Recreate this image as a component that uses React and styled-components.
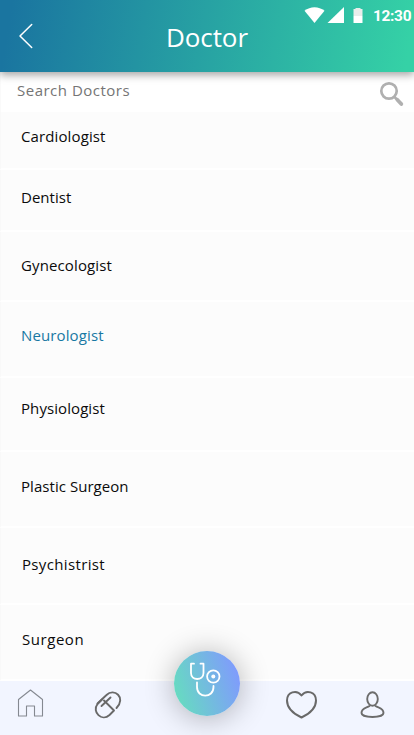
import React from "react";
import styled, { createGlobalStyle } from "styled-components";

const GlobalStyle = createGlobalStyle`
  * { box-sizing: border-box; }
  body { margin: 0; background: #fff; font-family: "Open Sans", "Noto Sans", sans-serif; }
`;

const Screen = styled.div`
  width: 414px;
  height: 735px;
  display: flex;
  flex-direction: column;
  overflow: hidden;
  background: #fff;
`;

const Header = styled.header`
  position: relative;
  z-index: 1;
  flex: none;
  height: 72px;
  display: grid;
  grid-template-columns: 133px 148px 133px;
  background: linear-gradient(100deg, #1a75a0 3%, #35d1a6 98%);
  box-shadow: 0 3px 8px rgba(0, 0, 0, 0.36);
`;

const BackButton = styled.button`
  display: flex;
  align-items: flex-start;
  padding: 23px 0 0 18px;
  border: 0;
  background: none;
`;

const Title = styled.h1`
  margin: 0;
  padding-top: 19px;
  text-align: center;
  font-size: 26px;
  line-height: 36px;
  font-weight: 400;
  letter-spacing: -0.1px;
  color: #fff;
`;

const StatusBar = styled.div`
  display: flex;
  justify-content: flex-end;
  align-items: flex-start;
  padding: 7px 3px 0 0;
`;

const Clock = styled.span`
  width: 38px;
  margin-left: 10px;
  font: 700 15.4px/18px Roboto, sans-serif;
  letter-spacing: -0.3px;
  white-space: nowrap;
  color: #fff;
`;

const SearchBar = styled.div`
  flex: none;
  height: 40px;
  display: flex;
  justify-content: space-between;
  padding: 8px 9px 0 16px;
  border-left: 1px solid #fafafa;
`;

const SearchLabel = styled.span`
  font-size: 15px;
  line-height: 21px;
  letter-spacing: 0.5px;
  color: #757575;
`;

const List = styled.ul`
  flex: none;
  height: 569px;
  margin: 0;
  padding: 0;
  list-style: none;
`;

const Row = styled.li`
  height: ${(p) => p.$height}px;
  padding: ${(p) => p.$top}px 0 0 ${(p) => p.$left}px;
  background: #fcfcfc;
  border-left: 1px solid #f9f9f9;
  border-bottom: 2px solid #fff;
  font-size: 15px;
  font-weight: 400;
  line-height: 20px;
  letter-spacing: ${(p) => p.$spacing}px;
  white-space: nowrap;
  color: ${(p) => (p.$active ? "#1878a3" : "#0b0b0b")};
`;

const NavBar = styled.nav`
  position: relative;
  flex: none;
  height: 54px;
  display: grid;
  grid-template-columns: 60px 94px 106px 82px 60px;
  align-items: start;
  justify-items: center;
  padding-top: 7px;
  background: #f2f5ff;
`;

const NavItem = styled.button`
  padding: 0;
  border: 0;
  background: none;
  line-height: 0;
`;

const DoctorButton = styled.button`
  position: absolute;
  left: 174px;
  top: -30px;
  width: 66px;
  height: 65px;
  padding: 0;
  border: 0;
  border-radius: 50%;
  line-height: 0;
  background: linear-gradient(72deg, #66dcc0 8%, #7f9dfb 88%);
  box-shadow: 0 2px 30px rgba(0, 0, 0, 0.3);
`;

const Icon = styled.svg`
  display: block;
  flex: none;
  fill: none;
  stroke-linecap: round;
  stroke-linejoin: round;
`;

const specialties = [
  { name: "Cardiologist", height: 58, top: 14, left: 20, spacing: 0.12 },
  { name: "Dentist", height: 62, top: 17, left: 20, spacing: 0.02 },
  { name: "Gynecologist", height: 70, top: 23, left: 20, spacing: 0.12 },
  { name: "Neurologist", height: 76, top: 23, left: 20, spacing: 0.12, active: true },
  { name: "Physiologist", height: 74, top: 20, left: 20, spacing: 0.08 },
  { name: "Plastic Surgeon", height: 76, top: 24, left: 20, spacing: 0.05 },
  { name: "Psychistrist", height: 77, top: 26, left: 21, spacing: 0.35 },
  { name: "Surgeon", height: 76, top: 24, left: 21, spacing: 0.55 },
];

export default function App() {
  return (
    <Screen>
      <GlobalStyle />
      <Header>
        <BackButton aria-label="Back">
          <Icon width="16" height="26" viewBox="0 0 16 26" stroke="#fff" strokeWidth="1.5">
            <path d="M13.7 1.5 2 13l11.7 11.5" />
          </Icon>
        </BackButton>
        <Title>Doctor</Title>
        <StatusBar>
          <Icon width="21" height="17" viewBox="0 0 21 17">
            <path d="M.5 3.7C6.2-1 14.8-1 20.5 3.7L10.5 16z" fill="#fff" />
          </Icon>
          <Icon width="19" height="17" viewBox="0 0 19 17">
            <path d="M2.5 16H19V0z" fill="#fff" />
          </Icon>
          <Icon width="19" height="17" viewBox="0 0 19 17">
            <path d="M9.5 2h2V1h5v1h2v7h-9z" fill="#e8edeb" />
            <path d="M9.5 9h9v7h-9z" fill="#fff" />
          </Icon>
          <Clock>12:30</Clock>
        </StatusBar>
      </Header>
      <SearchBar>
        <SearchLabel>Search Doctors</SearchLabel>
        <Icon width="26" height="28" viewBox="0 0 26 28" stroke="#b0b0b0">
          <circle cx="10" cy="11" r="7.7" strokeWidth="2.7" />
          <path d="m16 17.5 1.5 1.5" strokeWidth="2.5" />
          <path d="m18.3 19.8 4 4.2" strokeWidth="3.8" />
        </Icon>
      </SearchBar>
      <List>
        {specialties.map((s) => (
          <Row
            key={s.name}
            $height={s.height}
            $top={s.top}
            $left={s.left}
            $spacing={s.spacing}
            $active={s.active}
          >
            {s.name}
          </Row>
        ))}
      </List>
      <NavBar>
        <NavItem aria-label="Home">
          <Icon width="28" height="31" viewBox="0 0 28 31" stroke="#858991" strokeWidth="1.1">
            <path d="M2.5 11.5 14.5 2l12 9.5V28h-8V18h-8v10h-8z" />
          </Icon>
        </NavItem>
        <NavItem aria-label="Medicine">
          <Icon width="30" height="31" viewBox="0 0 30 31" stroke="#696969" strokeWidth="1.9">
            <path d="M5.5 15.5 14.5 7C22-.5 34.5 9.5 24.500 20" />
            <path d="M10 11.5 5.5 16c-6 8 4.5 18 12 11l4.500-4.500-10-10" />
            <path d="M9.5 18 18.5 9.5" />
          </Icon>
        </NavItem>
        <span />
        <NavItem aria-label="Favorites">
          <Icon width="34" height="31" viewBox="0 0 34 31" stroke="#696969" strokeWidth="2">
            <path d="M17.5 7.5C12.5 1 3 4 3 12.5 3 20 10 26 17.5 29.500 25 26 32 20 32 12.500 32 4 22.500 1 17.500 7.500z" />
          </Icon>
        </NavItem>
        <NavItem aria-label="Profile">
          <Icon width="26" height="31" viewBox="0 0 26 31" stroke="#6c6c6c" strokeWidth="1.9">
            <ellipse cx="13.5" cy="11" rx="5.3" ry="6.7" />
            <path d="M10.5 18C7.5 20 2.500 19.500 2.500 25c0 5.300 22 5.300 22 0 0-5.500-5-5-8-7" />
          </Icon>
        </NavItem>
        <DoctorButton aria-label="Doctor">
          <Icon width="66" height="65" viewBox="0 0 66 65" stroke="#fff" strokeWidth="1.8">
            <path d="M20 12.7h-3V22c0 8 12.5 8 12.5 0v-9.300h-3" />
            <circle cx="39.3" cy="25.5" r="6.2" />
            <circle cx="39.3" cy="25.5" r="2" fill="#fff" stroke="none" />
            <path d="M23 31.5V36c0 11.500 16.500 11.500 16.500 0v-1" />
          </Icon>
        </DoctorButton>
      </NavBar>
    </Screen>
  );
}
